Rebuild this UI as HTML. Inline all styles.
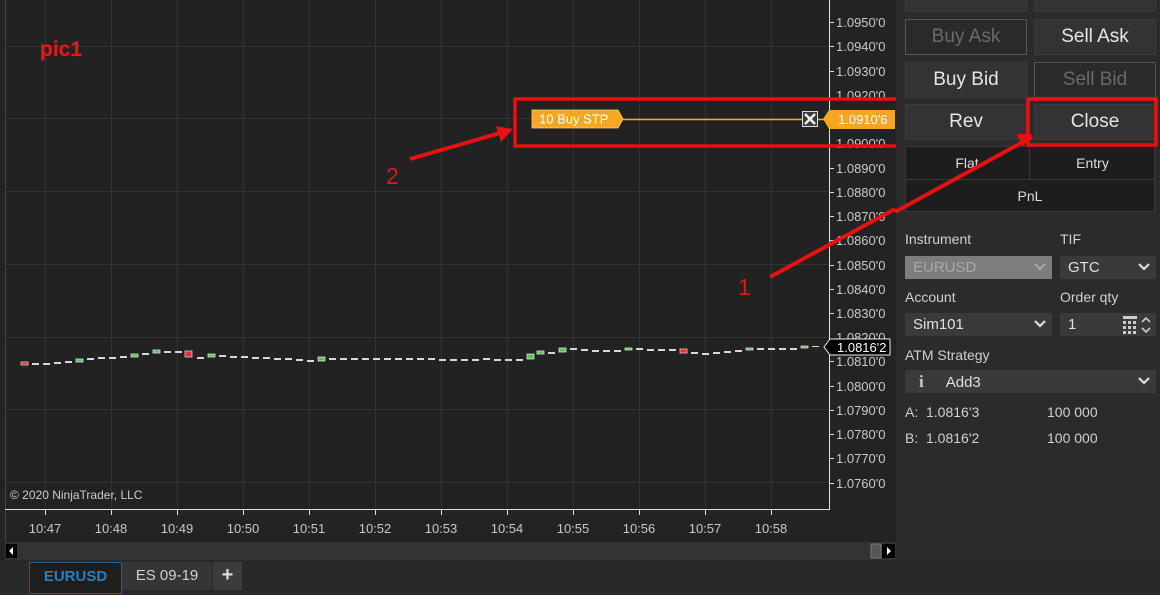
<!DOCTYPE html>
<html><head><meta charset="utf-8"><style>
*{margin:0;padding:0;box-sizing:border-box}
body{width:1160px;height:595px;overflow:hidden;background:#2a2a2b;font-family:"Liberation Sans",Arial,sans-serif;position:relative}
.a{position:absolute}
.btn{position:absolute;width:122px;height:36px;background:#333335;border:1px solid #3c3c3e;color:#e6e6e6;font-size:19px;text-align:center;line-height:34px}
.dis{background:#2a2a2b;border:1px solid #555;color:#6a6a6a}
.lbl{position:absolute;color:#d0d0d0;font-size:14px}
.sel{position:absolute;height:23px;background:#3a3a3d;color:#e0e0e0;font-size:15px;line-height:23px;padding-left:8px}
.chev{position:absolute;right:6px;top:6px}
</style></head><body>
<svg class="a" style="left:0;top:0" width="897" height="560" font-family="Liberation Sans, Arial, sans-serif">
<rect x="0" y="0" width="897" height="560" fill="#232324"/>
<rect x="5" y="0" width="824" height="510" fill="#222222"/>
<line x1="5.5" y1="0" x2="5.5" y2="542" stroke="#444"/>
<g stroke="#333" stroke-width="1">
<line x1="5" y1="46.5" x2="829" y2="46.5"/><line x1="5" y1="118.5" x2="829" y2="118.5"/><line x1="5" y1="191.5" x2="829" y2="191.5"/><line x1="5" y1="264.5" x2="829" y2="264.5"/><line x1="5" y1="337.5" x2="829" y2="337.5"/><line x1="5" y1="409.5" x2="829" y2="409.5"/><line x1="5" y1="482.5" x2="829" y2="482.5"/>
<line x1="45.5" y1="0" x2="45.5" y2="510"/><line x1="111.5" y1="0" x2="111.5" y2="510"/><line x1="177.5" y1="0" x2="177.5" y2="510"/><line x1="243.5" y1="0" x2="243.5" y2="510"/><line x1="309.5" y1="0" x2="309.5" y2="510"/><line x1="375.5" y1="0" x2="375.5" y2="510"/><line x1="441.5" y1="0" x2="441.5" y2="510"/><line x1="507.5" y1="0" x2="507.5" y2="510"/><line x1="573.5" y1="0" x2="573.5" y2="510"/><line x1="639.5" y1="0" x2="639.5" y2="510"/><line x1="705.5" y1="0" x2="705.5" y2="510"/><line x1="771.5" y1="0" x2="771.5" y2="510"/>
</g>
<line x1="829.5" y1="0" x2="829.5" y2="510" stroke="#ddd"/>
<line x1="5" y1="509.5" x2="830" y2="509.5" stroke="#ddd"/>
<g stroke="#ddd">
<line x1="45.5" y1="510" x2="45.5" y2="515"/><line x1="111.5" y1="510" x2="111.5" y2="515"/><line x1="177.5" y1="510" x2="177.5" y2="515"/><line x1="243.5" y1="510" x2="243.5" y2="515"/><line x1="309.5" y1="510" x2="309.5" y2="515"/><line x1="375.5" y1="510" x2="375.5" y2="515"/><line x1="441.5" y1="510" x2="441.5" y2="515"/><line x1="507.5" y1="510" x2="507.5" y2="515"/><line x1="573.5" y1="510" x2="573.5" y2="515"/><line x1="639.5" y1="510" x2="639.5" y2="515"/><line x1="705.5" y1="510" x2="705.5" y2="515"/><line x1="771.5" y1="510" x2="771.5" y2="515"/>
</g>
<g fill="#c8c8c8" font-size="13" text-anchor="middle">
<text x="45" y="533">10:47</text><text x="111" y="533">10:48</text><text x="177" y="533">10:49</text><text x="243" y="533">10:50</text><text x="309" y="533">10:51</text><text x="375" y="533">10:52</text><text x="441" y="533">10:53</text><text x="507" y="533">10:54</text><text x="573" y="533">10:55</text><text x="639" y="533">10:56</text><text x="705" y="533">10:57</text><text x="771" y="533">10:58</text>
</g>
<g fill="#c8c8c8" font-size="13">
<text x="836" y="27">1.0950'0</text><text x="836" y="51">1.0940'0</text><text x="836" y="76">1.0930'0</text><text x="836" y="100">1.0920'0</text><text x="836" y="148">1.0900'0</text><text x="836" y="173">1.0890'0</text><text x="836" y="197">1.0880'0</text><text x="836" y="221">1.0870'0</text><text x="836" y="245">1.0860'0</text><text x="836" y="270">1.0850'0</text><text x="836" y="294">1.0840'0</text><text x="836" y="318">1.0830'0</text><text x="836" y="342">1.0820'0</text><text x="836" y="366">1.0810'0</text><text x="836" y="391">1.0800'0</text><text x="836" y="415">1.0790'0</text><text x="836" y="439">1.0780'0</text><text x="836" y="463">1.0770'0</text><text x="836" y="488">1.0760'0</text>
</g>
<g stroke="#ddd"><line x1="829" y1="22.5" x2="834" y2="22.5"/><line x1="829" y1="46.5" x2="834" y2="46.5"/><line x1="829" y1="71.5" x2="834" y2="71.5"/><line x1="829" y1="168.5" x2="834" y2="168.5"/><line x1="829" y1="192.5" x2="834" y2="192.5"/><line x1="829" y1="216.5" x2="834" y2="216.5"/><line x1="829" y1="240.5" x2="834" y2="240.5"/><line x1="829" y1="265.5" x2="834" y2="265.5"/><line x1="829" y1="289.5" x2="834" y2="289.5"/><line x1="829" y1="313.5" x2="834" y2="313.5"/><line x1="829" y1="361.5" x2="834" y2="361.5"/><line x1="829" y1="386.5" x2="834" y2="386.5"/><line x1="829" y1="410.5" x2="834" y2="410.5"/><line x1="829" y1="434.5" x2="834" y2="434.5"/><line x1="829" y1="458.5" x2="834" y2="458.5"/><line x1="829" y1="483.5" x2="834" y2="483.5"/></g>
<g fill="#d8d8d8">
<rect x="32" y="363" width="7" height="2"/><rect x="43" y="363" width="7" height="2"/><rect x="54" y="362" width="7" height="2"/><rect x="65" y="361" width="7" height="2"/><rect x="87" y="358" width="7" height="2"/><rect x="98" y="357" width="7" height="2"/><rect x="109" y="357" width="7" height="2"/><rect x="120" y="356" width="7" height="2"/><rect x="142" y="353" width="7" height="2"/><rect x="164" y="351" width="7" height="2"/><rect x="175" y="351" width="7" height="2"/><rect x="197" y="357" width="7" height="2"/><rect x="219" y="355" width="7" height="2"/><rect x="230" y="356" width="7" height="2"/><rect x="241" y="356" width="7" height="2"/><rect x="252" y="357" width="7" height="2"/><rect x="263" y="357" width="7" height="2"/><rect x="274" y="358" width="7" height="2"/><rect x="285" y="358" width="7" height="2"/><rect x="296" y="359" width="7" height="2"/><rect x="307" y="360" width="7" height="2"/><rect x="329" y="358" width="7" height="2"/><rect x="340" y="358" width="7" height="2"/><rect x="351" y="358" width="7" height="2"/><rect x="362" y="358" width="7" height="2"/><rect x="373" y="358" width="7" height="2"/><rect x="384" y="358" width="7" height="2"/><rect x="395" y="358" width="7" height="2"/><rect x="406" y="358" width="7" height="2"/><rect x="417" y="358" width="7" height="2"/><rect x="428" y="358" width="7" height="2"/><rect x="439" y="359" width="7" height="2"/><rect x="450" y="359" width="7" height="2"/><rect x="461" y="359" width="7" height="2"/><rect x="472" y="359" width="7" height="2"/><rect x="483" y="358" width="7" height="2"/><rect x="494" y="359" width="7" height="2"/><rect x="505" y="359" width="7" height="2"/><rect x="516" y="359" width="7" height="2"/><rect x="548" y="352" width="7" height="2"/><rect x="570" y="348" width="7" height="2"/><rect x="581" y="349" width="7" height="2"/><rect x="592" y="350" width="7" height="2"/><rect x="603" y="350" width="7" height="2"/><rect x="614" y="350" width="7" height="2"/><rect x="636" y="348" width="7" height="2"/><rect x="647" y="349" width="7" height="2"/><rect x="658" y="349" width="7" height="2"/><rect x="669" y="349" width="7" height="2"/><rect x="691" y="352" width="7" height="2"/><rect x="702" y="353" width="7" height="2"/><rect x="713" y="352" width="7" height="2"/><rect x="724" y="351" width="7" height="2"/><rect x="735" y="350" width="7" height="2"/><rect x="757" y="348" width="7" height="2"/><rect x="768" y="348" width="7" height="2"/><rect x="779" y="348" width="7" height="2"/><rect x="790" y="348" width="7" height="2"/><rect x="812" y="346" width="7" height="1"/>
</g>
<g fill="#5fbf5f" stroke="#cde8cd" stroke-width="0.8">
<rect x="76" y="359" width="7" height="3"/><rect x="131" y="354" width="7" height="3"/><rect x="153" y="350" width="7" height="3"/><rect x="208" y="354" width="7" height="3"/><rect x="318" y="357" width="7" height="4"/><rect x="527" y="354" width="7" height="5"/><rect x="537" y="351" width="7" height="3"/><rect x="559" y="348" width="7" height="4"/><rect x="625" y="348" width="7" height="2"/><rect x="746" y="348" width="7" height="2"/><rect x="801" y="346" width="7" height="2"/>
</g>
<g fill="#e03030" stroke="#f0c0c0" stroke-width="0.8"><rect x="21" y="362" width="7" height="3"/><rect x="185" y="351" width="7" height="6"/><rect x="680" y="349" width="7" height="4"/></g>
<polygon points="824,347 830,339 890,339 890,355 830,355" fill="#000" stroke="#eee"/>
<text x="837" y="352" fill="#fff" font-size="13">1.0816'2</text>
<line x1="622" y1="119.5" x2="826" y2="119.5" stroke="#f5a623" stroke-width="1.5"/>
<polygon points="532,110 618,110 623,119 618,128 532,128" fill="#f5a623" stroke="#ffd37a" stroke-width="0.8"/>
<text x="539" y="123.5" fill="#fff" font-size="13">10  Buy STP</text>
<rect x="802.5" y="111.5" width="15" height="15" fill="#3a3a3a" stroke="#ddd"/>
<path d="M805 114 L815 124 M815 114 L805 124" stroke="#eee" stroke-width="2.6"/>
<polygon points="823,119 829,110 895,110 895,129 829,129" fill="#f5a623"/>
<text x="838" y="124" fill="#fff" font-size="13">1.0910'6</text>
<text x="10" y="499" fill="#ccc" font-size="12">© 2020 NinjaTrader, LLC</text>
<rect x="5" y="542" width="891" height="18" fill="#333335"/>
<rect x="6" y="544" width="11" height="14" fill="#000"/><polygon points="9,551 13,547 13,555" fill="#fff"/>
<rect x="871" y="544" width="10" height="14" fill="#555" stroke="#777"/>
<rect x="882" y="544" width="13" height="14" fill="#000"/><polygon points="887,547 891,551 887,555" fill="#fff"/>
<text x="40" y="56" fill="#e01818" font-size="21" font-weight="bold" stroke="#e01818" stroke-width="0.2">pic1</text>
<text x="386" y="184" fill="#e01818" font-size="23">2</text>
<text x="738" y="295" fill="#e01818" font-size="23">1</text>
<line x1="410" y1="159" x2="500" y2="133" stroke="#e81010" stroke-width="4"/>
<polygon points="513,129 496,126 501,142" fill="#e81010"/>
<line x1="770" y1="277" x2="895" y2="209" stroke="#e81010" stroke-width="4"/>
<rect x="515" y="99" width="396" height="47" fill="none" stroke="#e81010" stroke-width="3.5"/>
</svg>
<div class="a" style="left:896px;top:0;width:264px;height:560px;background:#2b2b2c"></div>
<div class="btn" style="left:905px;top:-24px"></div>
<div class="btn" style="left:1034px;top:-24px"></div>
<div class="btn dis" style="left:905px;top:19px">Buy Ask</div>
<div class="btn" style="left:1034px;top:19px">Sell Ask</div>
<div class="btn" style="left:905px;top:62px">Buy Bid</div>
<div class="btn dis" style="left:1034px;top:62px">Sell Bid</div>
<div class="btn" style="left:905px;top:104px">Rev</div>
<div class="btn" style="left:1034px;top:104px">Close</div>
<div class="a" style="left:905px;top:146px;width:250px;height:66px;background:#1d1d1e;border:1px solid #3a3a3a"></div>
<div class="a" style="left:1029px;top:147px;width:1px;height:33px;background:#3a3a3a"></div>
<div class="a" style="left:906px;top:179px;width:248px;height:1px;background:#3a3a3a"></div>
<div class="a" style="left:905px;top:155px;width:124px;text-align:center;color:#ddd;font-size:14px">Flat</div>
<div class="a" style="left:1030px;top:155px;width:125px;text-align:center;color:#ddd;font-size:14px">Entry</div>
<div class="a" style="left:905px;top:188px;width:250px;text-align:center;color:#ddd;font-size:14px">PnL</div>
<svg class="a" style="left:895px;top:0" width="265" height="300"><line x1="137" y1="137" x2="0" y2="212" stroke="#e81010" stroke-width="4"/><polygon points="137,134 122,134 128,147" fill="#e81010"/><rect x="133" y="99" width="128" height="46" fill="none" stroke="#e81010" stroke-width="3.5"/></svg>
<div class="lbl" style="left:905px;top:231px">Instrument</div>
<div class="lbl" style="left:1060px;top:231px">TIF</div>
<div class="sel" style="left:905px;top:256px;width:147px;background:#7d7d7d;color:#a8a8a8">EURUSD<svg class="chev" width="12" height="10"><path d="M1 2 L6 7 L11 2" stroke="#aaa" stroke-width="2.2" fill="none"/></svg></div>
<div class="sel" style="left:1060px;top:256px;width:96px">GTC<svg class="chev" width="12" height="10"><path d="M1 2 L6 7 L11 2" stroke="#ddd" stroke-width="2.2" fill="none"/></svg></div>
<div class="lbl" style="left:905px;top:289px">Account</div>
<div class="lbl" style="left:1060px;top:289px">Order qty</div>
<div class="sel" style="left:905px;top:313px;width:147px">Sim101<svg class="chev" width="12" height="10"><path d="M1 2 L6 7 L11 2" stroke="#ddd" stroke-width="2.2" fill="none"/></svg></div>
<div class="sel" style="left:1060px;top:313px;width:96px">1</div>
<svg class="a" style="left:1122px;top:315px" width="34" height="20"><rect x="1" y="1" width="14" height="3" fill="#ccc"/><g fill="#ccc"><rect x="1" y="6" width="3" height="3"/><rect x="6" y="6" width="3" height="3"/><rect x="11" y="6" width="3" height="3"/><rect x="1" y="11" width="3" height="3"/><rect x="6" y="11" width="3" height="3"/><rect x="11" y="11" width="3" height="3"/><rect x="1" y="16" width="3" height="3"/><rect x="6" y="16" width="3" height="3"/><rect x="11" y="16" width="3" height="3"/></g><path d="M20 7 L24 3 L28 7 M20 13 L24 17 L28 13" stroke="#ccc" stroke-width="1.6" fill="none"/></svg>
<div class="lbl" style="left:905px;top:347px">ATM Strategy</div>
<div class="sel" style="left:905px;top:370px;width:251px"><span style="font-family:'Liberation Serif',serif;font-weight:bold;color:#ccc;font-size:17px;margin-left:6px">i</span><span style="margin-left:22px">Add3</span><svg class="chev" width="12" height="10"><path d="M1 2 L6 7 L11 2" stroke="#ddd" stroke-width="2.2" fill="none"/></svg></div>
<div class="lbl" style="left:905px;top:404px">A:&nbsp; 1.0816'3</div>
<div class="lbl" style="left:1047px;top:404px">100 000</div>
<div class="lbl" style="left:905px;top:430px">B:&nbsp; 1.0816'2</div>
<div class="lbl" style="left:1047px;top:430px">100 000</div>
<div class="a" style="left:0;top:560px;width:1160px;height:35px;background:#29292a"></div>
<div class="a" style="left:29px;top:562px;width:93px;height:32px;background:#1e1e1e;border:1px solid #2d5a80;color:#2a7fc0;font-weight:bold;font-size:15px;text-align:center;line-height:28px">EURUSD</div>
<div class="a" style="left:122px;top:562px;width:90px;height:28px;background:#353537;color:#d0d0d0;font-size:15px;text-align:center;line-height:28px">ES 09-19</div>
<div class="a" style="left:213px;top:562px;width:29px;height:28px;background:#3c3c3e;color:#ddd;font-size:20px;font-weight:bold;text-align:center;line-height:27px">+</div>
</body></html>
